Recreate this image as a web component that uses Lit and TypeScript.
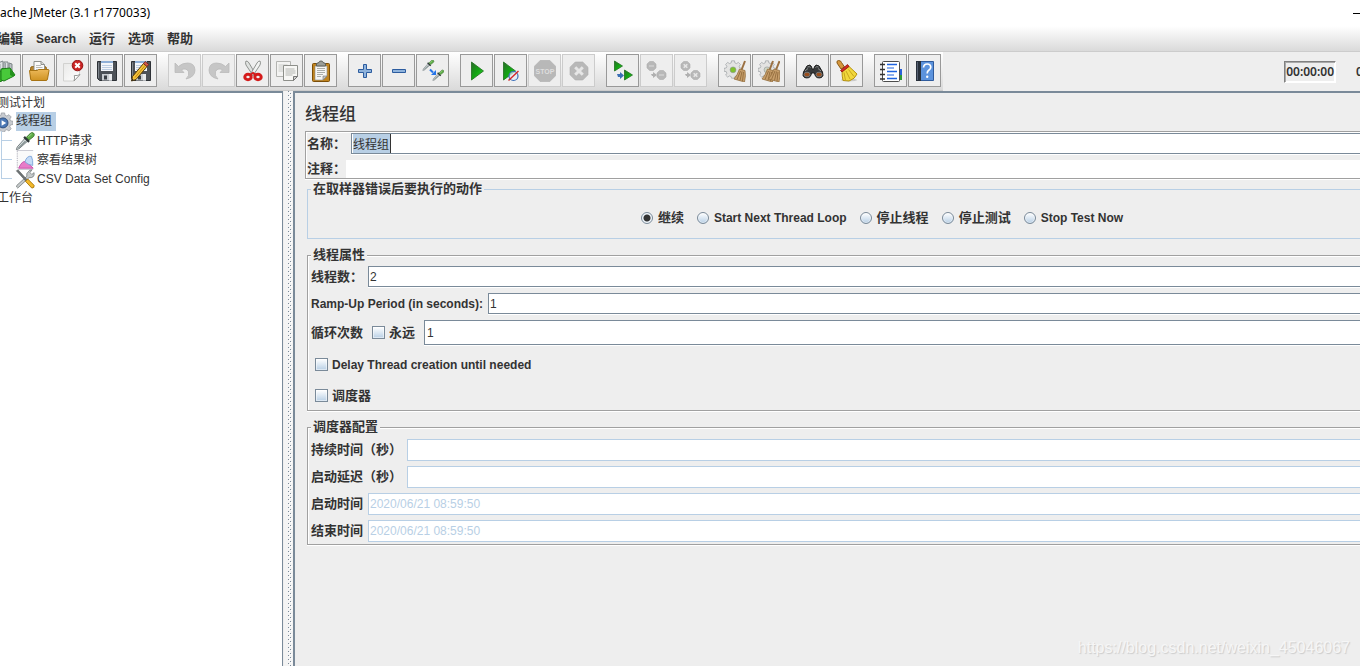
import { LitElement, html, svg, css, nothing } from "lit";
import { customElement, property } from "lit/decorators.js";

const sheet = (x: number, y: number, w: number, h: number) => svg`
  <path d="M${x} ${y}h${w}v${h - 4}l-4 4h-${w - 4}z" fill="#f7f7f5" stroke="#8d8f8a"/>
  <path d="M${x + w} ${y + h - 4}h-4v4z" fill="#cfd0cd" stroke="#777"/>
  <path d="M${x + 2} ${y + 3.5}h${w - 5}M${x + 2} ${y + 5.5}h${w - 4}M${x + 2} ${y + 7.5}h${w - 4}M${x + 2} ${y + 9.5}h${w - 7}" stroke="#b4b6b2"/>`;

const floppy = svg`
  <path d="M1.500 1.500h19v19h-17l-2-2z" fill="#4c5157" stroke="#2d3136"/>
  <path d="M2.500 2.500v15.500" stroke="#7e858c"/>
  <path d="M5 1h12v10h-12z" fill="#f3f6fa"/>
  <path d="M5 1h12v2h-12z" fill="#8fb0d8"/>
  <path d="M6 5.500h10M6 7.500h10M6 9.500h10" stroke="#bccde2"/>
  <path d="M6 14h10v6.500h-10z" fill="#c9cdd1"/>
  <path d="M8 15.500h3v4h-3z" fill="#3a3f45"/>
  <path d="M13 14h3v6.500h-3z" fill="#e8eaec"/>`;

const pipette = svg`
  <path d="M1.500 20.500l1-3L11 8l3 3-9.500 8.500z" fill="#dfe5e6" stroke="#6a7476"/>
  <path d="M3 18.500l8-8 1.500 1.500-8 7z" fill="#8b9798"/>
  <path d="M10 6.500l5.500 5.500" stroke="#30383a" stroke-width="2.500"/>
  <path d="M12.500 7L17 2.500q2-1.500 3.500 0t0 3.500L15.500 10z" fill="#5fae49" stroke="#37722a"/>
  <path d="M14.500 6.500l4-3.500" stroke="#a6dc93"/>`;

const gear = (fill: string, hub: string, r: number) => svg`
  <g stroke="#8b9096" stroke-width=".7" fill="${fill}">
    <path d="M9.200 1h3.600l.5 2.600 2 .8 2.200-1.500 2.500 2.500L18.500 7.700l.8 2L22 10.200v3.500l-2.700.5-.8 2 1.500 2.200-2.500 2.500-2.200-1.500-2 .8-.5 2h-3.600l-.5-2-2-.8-2.200 1.500L2 18.400l1.500-2.200-.8-2L0 13.700v-3.500l2.700-.5.8-2L2 5.400l2.500-2.500 2.200 1.500 2-.8z"/>
    <circle cx="11" cy="12" r="${r}" fill="${hub}"/>
  </g>`;

const broom = (x: number) => svg`
  <g transform="translate(${x} 0)">
    <path d="M10 1l-3.500 9" stroke="#9b7143" stroke-width="2"/>
    <path d="M4.500 9l5.500 1.500q1 5-.5 11.500L-1 19q3.500-4 5.500-10z" fill="#c89f6b" stroke="#96703f" stroke-width=".8"/>
    <path d="M5.500 11L2 19.500M7 11.500L5 20.500M8.500 12l-1 9" stroke="#8a6436" stroke-width=".8"/>
  </g>`;

const tri = (x: number, y: number, w: number, h: number) => svg`
  <path d="M${x} ${y}l${w} ${h / 2}l-${w} ${h / 2}z" fill="url(#green)" stroke="#1d6f1c" stroke-width=".8"/>`;

const octagon = (cx: number, cy: number, r: number) => {
  const k = r * 0.42;
  return svg`<path d="M${cx - k} ${cy - r}H${cx + k}L${cx + r} ${cy - k}V${cy + k}L${cx + k} ${cy + r}H${cx - k}L${cx - r} ${cy + k}V${cy - k}z" fill="#b8b8b8" stroke="#adadad" stroke-width=".6"/>`;
};

const cross = (cx: number, cy: number, r: number, w: number) => svg`
  <path d="M${cx - r} ${cy - r}l${2 * r} ${2 * r}M${cx + r} ${cy - r}l-${2 * r} ${2 * r}" stroke="#e6e6e6" stroke-width="${w}"/>`;

const icons: Record<string, unknown> = {
  templates: svg`
    <path d="M4 3l5-2v12H4zM10 2h4v12h-4z" fill="#dfe3e5" stroke="#7d8587"/>
    <path d="M15 3l3 1v9h-3z" fill="#b9c0c3" stroke="#7d8587"/>
    <path d="M11.500 3v8M6 4v7" stroke="#9aa3a6"/>
    <path d="M1 11h6l2-3v12l-2 1.500H1z" fill="#35b52a" stroke="#1d7c18"/>
    <path d="M7 9l9-1 5 7-2 1.500-9 4.500-3-1z" fill="#48c93a" stroke="#1d7c18"/>
    <path d="M16 8l5 7-2 1.500-3-1.500z" fill="#24921d"/>`,
  open: svg`
    <path d="M2.500 8.500q0-2 2-2h12q2 0 2 2v9h-16z" fill="#b9852c" stroke="#8f6312"/>
    <path d="M6 1.500h7l3.500 3V11H6z" fill="#fafafa" stroke="#8f918c"/>
    <path d="M13 1.500v3h3.500" fill="#ddd" stroke="#8f918c"/>
    <path d="M8 5.500h5M8 7.500h6.500M8 9.500h6.500" stroke="#b8bab6"/>
    <path d="M1.500 10.500h8l1-1h9.500q1 0 1 1l-1.500 8.500q-.3 1.500-1.500 1.500h-14q-1.200 0-1.400-1.500z" fill="url(#amber)" stroke="#a87414"/>`,
  close: svg`
    <path d="M1.500 3.500h16v12l-5.500 5.500H1.500z" fill="url(#page)" stroke="#d2d2d0"/>
    <path d="M18 14.500l-6 6.500q1-3 .3-5.500 3 .5 5.700-1z" fill="#fff" stroke="#989a97"/>
    <circle cx="15.500" cy="5.500" r="5.300" fill="#c92323" stroke="#941111"/>
    <path d="M13.200 3.200l4.600 4.600m0-4.600l-4.600 4.600" stroke="#fff" stroke-width="2"/>`,
  save: floppy,
  saveAs: svg`${floppy}
    <path d="M2.500 16.500L13.500 3.500l3.500 3L6 19.500 1.500 21z" fill="#f5c33a" stroke="#5a3c06"/>
    <path d="M5 17.500L15.300 5.200" stroke="#c48a14"/>
    <path d="M13.500 3.500l1.700-2 3.500 3-1.700 2z" fill="#d55a4b" stroke="#6d2118" stroke-width=".8"/>
    <path d="M1.500 21l.6-2.500 1.800 1.700z" fill="#222"/>`,
  undo: svg`<path d="M1 3v9.500h9L7.300 9.700q5.500-2.200 7.200 2 1.300 3.800-2.500 7.300 9-2 9-9Q20.500 3 13.500 3 8 3 4.500 6.500z" fill="#c6c6c6" stroke="#bababa" stroke-width=".8"/>`,
  redo: svg`<path d="M21 3v9.500h-9l2.700-2.800q-5.500-2.200-7.200 2-1.300 3.800 2.500 7.300-9-2-9-9Q1.500 3 8.500 3q5.500 0 9 3.500z" fill="#c6c6c6" stroke="#bababa" stroke-width=".8"/>`,
  cut: svg`
    <path d="M4 1q2 0 3 2l6.500 11-2.500 1.500L4 5Q3 2.500 4 1z" fill="#dfe2e0" stroke="#858884" stroke-width=".9"/>
    <path d="M18 1q-2 0-3 2L8.500 14l2.500 1.500L18 5Q19 2.500 18 1z" fill="#f2f3f2" stroke="#858884" stroke-width=".9"/>
    <ellipse cx="6" cy="17" rx="3.200" ry="2.700" fill="#eee" stroke="#d41b1b" stroke-width="3"/>
    <ellipse cx="16" cy="17" rx="3.200" ry="2.700" fill="#eee" stroke="#d41b1b" stroke-width="3"/>
    <path d="M8 15l3-2 3 2" stroke="#d41b1b" stroke-width="2"/>`,
  copy: svg`<g opacity=".6">${sheet(0.5, 1.5, 14, 15)}</g>${sheet(7.5, 5.5, 14, 15)}`,
  paste: svg`
    <rect x="2.500" y="3.500" width="17" height="18" rx="1" fill="#c0841f" stroke="#7c4f09"/>
    <path d="M5 6h12v10l-4 4H5z" fill="#f6f6f5" stroke="#8c8d8a" stroke-width=".6"/>
    <path d="M17 16h-4v4z" fill="#c4c5c2" stroke="#777" stroke-width=".6"/>
    <path d="M7 8.500h8M7 10.500h8M7 12.500h8M7 14.500h6M7 16.500h4" stroke="#abada9"/>
    <path d="M6.500 6V3.500L9 2.500q0-1.500 2-1.500t2 1.500l2.500 1V6z" fill="#9a9d98" stroke="#5c5f5a"/>`,
  plus: svg`<path d="M9.500 4.500h3v5h5v3h-5v5h-3v-5h-5v-3h5z" fill="#8fb3dc" stroke="#2c5c9f"/>`,
  minus: svg`<path d="M4.500 9.500h13v3h-13z" fill="#8fb3dc" stroke="#2c5c9f"/>`,
  toggle: svg`
    <g transform="translate(0 -1) scale(.56)">${pipette}</g>
    <g transform="translate(10 9) scale(.56)">${pipette}</g>
    <path d="M8 9.500l3 3" stroke="#2474e8" stroke-width="2"/>
    <path d="M14 10v5H9z" fill="#2474e8"/>`,
  start: tri(5.5, 2, 12, 18),
  startNoTimers: svg`${tri(3.5, 2, 12, 18)}
    <circle cx="13.500" cy="16" r="4.500" fill="#e6edf6" fill-opacity=".7" stroke="#3a6eb8" stroke-width="1.200"/>
    <path d="M8.500 20.500L18.500 11" stroke="#d42a2a" stroke-width="1.400"/>`,
  stop: svg`${octagon(11, 11, 10.8)}
    <text x="11" y="14" text-anchor="middle" class="stop-word">STOP</text>`,
  shutdown: svg`${octagon(11, 11, 9)}${cross(11, 11, 3.8, 3)}`,
  remoteStart: svg`${tri(2.5, 1, 8, 10)}${tri(12.5, 10, 8, 10)}
    <path d="M5 14h3v-2l4 3.500-4 3.500v-2H6z" fill="#3b6fb5"/>`,
  remoteStop: svg`${octagon(5.5, 6, 4.5)}${octagon(15.5, 15, 4.5)}
    <path d="M3 6h5M13 15h5" stroke="#d0d0d0" stroke-width="1.600"/>
    <path d="M5 14h2v-2l4 3-4 3v-2H6z" fill="#b0b0b0"/>`,
  remoteShutdown: svg`${octagon(5.5, 6, 4.5)}${octagon(15.5, 15, 4.5)}${cross(5.5, 6, 1.8, 1.6)}${cross(15.5, 15, 1.8, 1.6)}
    <path d="M5 14h2v-2l4 3-4 3v-2H6z" fill="#b0b0b0"/>`,
  clear: svg`<g transform="scale(.82)">${gear("#e3e3e2", "#7fc22e", 3.6)}</g>${broom(11)}`,
  clearAll: svg`<g transform="scale(.82)">${gear("#e3e3e2", "#cfd6c4", 3.6)}</g>${broom(5)}${broom(11.5)}`,
  search: svg`
    <path d="M5 6q3-2 4.500.5L10 9h2l.5-2.500Q14 4 17 6l3.500 6q1.500 4-1 5.500-5 1.500-6.500-2.500l-.5-2h-3l-.5 2Q7.500 19 2.500 17.500 0 16 1.500 12z" fill="#37393a" stroke="#1c1d1d"/>
    <path d="M5.500 7q2-1 3 .5M13.500 7.500q1-1.500 3-.5M3 11l3-2.500M19 11l-3-2.500" stroke="#8d9090" fill="none"/>
    <ellipse cx="5" cy="14.500" rx="3" ry="2.300" fill="#9a4f1e" stroke="#777"/>
    <ellipse cx="17" cy="14.500" rx="3" ry="2.300" fill="#9a4f1e" stroke="#777"/>`,
  searchReset: svg`
    <ellipse cx="13" cy="20" rx="8" ry="1.500" fill="#c9c9c9"/>
    <path d="M1 3q-.5-2.500 1.500-2.500Q5 .5 5.500 2.500L8.500 7l-3.500 2z" fill="#d5973c" stroke="#8b5a14"/>
    <path d="M6 11l6.500-5 8.500 8q-2 5-8 7l-6-.5q-1-4-1-9.500z" fill="#f2d83c" stroke="#b5910f"/>
    <path d="M8 12.500l1.500 8M10 11l4 8M12.500 9.500l5.500 7" stroke="#c7a51c"/>
    <path d="M4.500 10.500L11.500 4.500l1.500 2-7 5.500z" fill="#d22a22" stroke="#8e120c" stroke-width=".8"/>`,
  functions: svg`
    <path d="M19 9h3v6h-3z" fill="#2a62d8"/><path d="M19 15h3v5h-3z" fill="#2c9a35"/>
    <rect x="2.500" y="1.500" width="17" height="20" rx="1" fill="#fff" stroke="#4c4c4c"/>
    <path d="M0 4.500h5M0 9.500h5M0 14.500h5M0 19h5" stroke="#333" stroke-width="1.500"/>
    <path d="M7 4.500h10M7 11.500h10M7 18.500h10" stroke="#1f63e0" stroke-width="1.400"/>
    <path d="M7 8h7M7 15h7" stroke="#1f63e0" stroke-width="1.200"/>`,
  help: svg`
    <path d="M2.500 1.500h17v19h-17z" fill="#5c93dd" stroke="#2f5b9c"/>
    <path d="M2 1h5v20H2z" fill="#28303b"/>
    <path d="M3.500 2v18" stroke="#566071"/>
    <path d="M9.500 7.500q.3-3.500 3.700-3.500t3.600 3q0 2-2 3.300-1.600 1-1.600 3.200" stroke="#fff" stroke-width="1.700" fill="none"/>
    <circle cx="13.200" cy="16.800" r="1.200" fill="#fff"/>`,
  gear: svg`${gear("#c7cbd0", "#e9eef5", 5)}<circle cx="11" cy="12" r="5.500" fill="#4b78b5" stroke="#2c4c7c"/><path d="M9.500 9l5 3-5 3z" fill="#fff"/>`,
  pipette,
  chart: svg`
    <path d="M3 1v20h17V1z" fill="#fafafa"/>
    <path d="M2 .5h18M3 21.500h17" stroke="#c4c4ce"/>
    <path d="M2.500 1v20" stroke="#9a9aa8" stroke-dasharray="1 1"/>
    <path d="M4 20q4-9 8-7 3 2 8 7z" fill="#e77cc9" stroke="#c74ba6"/>
    <path d="M11 13q2-7 7-6 2 4 1.500 10-6-1-8.500-4z" fill="#c4daf6" stroke="#7da5da"/>`,
  tools: svg`
    <path d="M3 21q-2-1-1-3L13 8V5l3-3.500 2.500-.5-2 3 2 2L21 4q.5 3-1 4.500-2 1.500-4.500 1z" fill="#c6cacb" stroke="#6c7273" stroke-width=".8"/>
    <path d="M1.500 2l2-1 10 11-1.500 1.500z" fill="#6d7273" stroke="#44494a" stroke-width=".6"/>
    <path d="M11.500 13.500l2.500-2.500 7 7q.5 3-2.500 3z" fill="#f3b92b" stroke="#a87508"/>`,
};

interface Tool { icon: string; label: string; off?: boolean }
const t = (icon: string, label: string, off = false): Tool => ({ icon, label, off });

const toolGroups: Tool[][] = [
  [t("templates", "Templates"), t("open", "打开"), t("close", "关闭"), t("save", "保存"), t("saveAs", "保存为")],
  [t("undo", "撤销", true), t("redo", "重做", true), t("cut", "剪切"), t("copy", "复制"), t("paste", "粘贴")],
  [t("plus", "展开"), t("minus", "收起"), t("toggle", "切换")],
  [t("start", "启动"), t("startNoTimers", "不停顿启动"), t("stop", "停止", true), t("shutdown", "关闭线程", true)],
  [t("remoteStart", "远程启动"), t("remoteStop", "远程停止", true), t("remoteShutdown", "远程关闭", true)],
  [t("clear", "清除"), t("clearAll", "清除全部")],
  [t("search", "查找"), t("searchReset", "重置查找")],
  [t("functions", "函数助手"), t("help", "帮助")],
];

const onError = ["继续", "Start Next Thread Loop", "停止线程", "停止测试", "Stop Test Now"];

@customElement("jm-icon")
class JmIcon extends LitElement {
  @property() name = "";

  static styles = css`
    :host { display: block; width: 22px; height: 22px; }
    svg { display: block; width: 100%; height: 100%; }
    .stop-word { font: bold 7px "Liberation Sans", sans-serif; fill: #dedede; }
  `;

  render() {
    return html`<svg viewBox="0 0 22 22" fill="none" aria-hidden="true">
      <defs>
        <linearGradient id="green" x1="0" y1="0" x2="1" y2="1">
          <stop offset="0" stop-color="#2c6b2c"/><stop offset=".5" stop-color="#12a512"/><stop offset="1" stop-color="#35d135"/>
        </linearGradient>
        <linearGradient id="amber" x1="0" y1="0" x2="0" y2="1">
          <stop offset="0" stop-color="#edb95a"/><stop offset="1" stop-color="#cf9322"/>
        </linearGradient>
        <linearGradient id="page" x1="0" y1="0" x2="1" y2="1">
          <stop offset="0" stop-color="#e9e9e8"/><stop offset="1" stop-color="#fff"/>
        </linearGradient>
      </defs>
      ${icons[this.name] ?? nothing}
    </svg>`;
  }
}

@customElement("app-root")
class AppRoot extends LitElement {
  static styles = css`
    :host {
      --line: #7a8a99;
      --soft: #b8cfe5;
      --etch: #a0a0a0;
      --face: #eeeeee;
      display: flex;
      flex-direction: column;
      min-height: 100vh;
      position: relative;
      overflow: hidden;
      background: var(--face);
      color: #333;
      font: 12px/16px "Liberation Sans", "Noto Sans CJK SC", sans-serif;
    }
    * { box-sizing: border-box; }
    button, input { font: inherit; color: inherit; margin: 0; }

    .title-bar {
      display: flex;
      justify-content: space-between;
      align-items: center;
      height: 26px;
      background: #fff;
      color: #000;
      font: 12px/16px "Noto Sans", sans-serif;
    }
    .minimize { width: 7px; height: 20px; padding: 0; border: 0; background: none; display: flex; align-items: center; }
    .minimize::before { content: ""; width: 100%; height: 1px; background: #000; }

    .menu {
      display: flex;
      gap: 13px;
      height: 26px;
      align-items: center;
      margin-left: -3px;
      background: linear-gradient(#fff, #dadada);
      border-bottom: 1px solid #ccc;
    }
    .menu button { border: 0; padding: 0; background: none; font-weight: bold; }
    .cjk { font-size: 13px; }

    .tools {
      display: flex;
      align-items: center;
      justify-content: space-between;
      height: 39px;
      margin-left: -12px;
    }
    .groups {
      display: flex;
      gap: 11px;
      align-items: center;
      align-self: stretch;
      padding: 0 2px 1px 0;
      border-bottom: 1px solid #ccc;
      background: linear-gradient(#fff, #dadada);
    }
    .group { display: flex; gap: 1px; }
    .tool {
      display: grid;
      place-items: center;
      width: 33px;
      height: 33px;
      padding: 0;
      border: 1px solid #999;
      background: var(--face);
    }
    .tool:disabled { border-color: #ccc; }
    .status { display: flex; align-items: center; gap: 20px; }
    .clock { height: 22px; padding: 1px; border: 1px solid; border-color: #808080 #fff #fff #808080; box-shadow: inset 1px 1px 0 #aaa, inset -1px -1px 0 #fff; }
    .clock, .count { font: 600 12px/18px "Noto Sans", sans-serif; }
    .count { width: 4px; white-space: nowrap; }

    .main { flex: 1; display: grid; grid-template-columns: 284px 9px minmax(0, 1fr); }
    .tree-pane { background: #fff; border-top: 2px solid var(--line); border-right: 1px solid var(--line); margin-right: 1px; }
    .divider { background: #f4f4f4; }
    .divider svg { display: block; width: 9px; height: 100%; }

    ul { list-style: none; margin: 0; padding: 0; }
    .node { display: flex; align-items: center; height: 19px; gap: 2px; }
    .root-node { margin-left: -3px; }
    .group-node { margin-left: -7px; gap: 3px; }
    .node jm-icon { width: 20px; height: 20px; }
    .picked { background: var(--soft); height: 19px; line-height: 19px; padding-right: 4px; }
    .children { margin-left: 1px; }
    .children li { display: flex; gap: 3px; position: relative; }
    .children li::before { content: ""; width: 10px; height: 9px; border-left: 1px solid var(--soft); border-bottom: 1px solid var(--soft); }
    .children li:not(:last-child)::after { content: ""; position: absolute; left: 0; top: 0; height: 100%; border-left: 1px solid var(--soft); }

    .pane { border-top: 2px solid var(--line); border-left: 2px solid var(--line); padding: 10px 0 0 10px; }
    h1 { margin: 0; font-size: 17px; line-height: 24px; font-weight: 500; }
    .identity { margin-top: 4px; border: 1px solid var(--etch); border-right: 0; box-shadow: inset 1px 1px 0 #fff, 0 1px 0 #fff; padding: 1px 0 0 1px; }
    .row { display: flex; align-items: center; gap: 5px; }
    .row label, legend, .check { font-weight: bold; white-space: nowrap; }
    .row + .row { margin-top: 6px; }
    .row.flush { gap: 0; }
    .field {
      flex: 1;
      min-width: 0;
      height: 21px;
      padding: 0 1px;
      border: 1px solid var(--line);
      border-right: 0;
      border-radius: 0;
      background: #fff;
      box-shadow: 0 1px 0 #fff;
      outline: 0;
    }
    .bare { height: 18px; border: 0; box-shadow: none; }
    .tall { height: 25px; padding-left: 2px; }
    .marked {
      background: linear-gradient(var(--soft), var(--soft)) 1px 0 / 37px 100% no-repeat,
        linear-gradient(#333, #333) 38px 0 / 1px 100% no-repeat, #fff;
    }
    .field:disabled { height: 22px; border-color: var(--soft); color: var(--soft); box-shadow: none; }

    fieldset { margin: 0 0 8px 2px; padding: 3px 0 2px 3px; border: 1px solid var(--etch); border-right: 0; box-shadow: inset 1px 1px 0 #fff, 0 1px 0 #fff; min-width: 0; }
    legend { padding: 0 2px; background: var(--face); font-size: 13px; margin: 0; }
    .choices { margin-top: 2px; border-color: var(--soft); box-shadow: none; padding: 11px 0 11px 96px; }
    .choices legend { margin-left: -93px; }
    .schedule { padding-top: 4px; }
    .schedule .row + .row { margin-top: 5px; }
    .radios { display: flex; justify-content: center; gap: 13px; }
    .check { display: flex; align-items: center; gap: 4px; height: 19px; }
    .radios .check { gap: 5px; }
    .gap { margin-left: 4px; }
    .lone { margin: 10px 0 0 4px; }
    .lone + .lone { margin-top: 12px; }
    .last { margin-bottom: 3px; }
    input[type="radio"], input[type="checkbox"] {
      appearance: none;
      flex: none;
      width: 13px;
      height: 13px;
      border: 1px solid var(--line);
      background: linear-gradient(#fff, #dce8f3 50%, var(--soft));
      box-shadow: inset 0 0 0 1px #ffffff80;
    }
    input[type="radio"] { width: 12px; height: 12px; border-radius: 50%; }
    input[type="radio"]:checked { background: radial-gradient(circle, #333 3px, #e8f0f7 4px); }

    .watermark {
      position: absolute;
      right: 10px;
      bottom: 8px;
      color: #f6f6f6;
      font-size: 16px;
      line-height: 20px;
      text-shadow: 1px 1px 1px #ccc;
    }
  `;

  private label(text: string, id: string) {
    return html`<label class=${/^[\x00-\x7f]+$/.test(text) ? "" : "cjk"} for=${id}>${text}</label>`;
  }

  private row(text: string, id: string, value: string, disabled = false) {
    return html`<div class="row">
      ${this.label(text, id)}
      <input class="field" id=${id} type="text" .value=${value} ?disabled=${disabled}>
    </div>`;
  }

  render() {
    return html`
      <header class="title-bar">
        <span>ache JMeter (3.1 r1770033)</span>
        <button class="minimize" aria-label="最小化"></button>
      </header>
      <nav class="menu">
        <button class="cjk">编辑</button>
        <button>Search</button>
        <button class="cjk">运行</button>
        <button class="cjk">选项</button>
        <button class="cjk">帮助</button>
      </nav>
      <div class="tools">
        <div class="groups">
          ${toolGroups.map((group) => html`<div class="group">
            ${group.map((tool) => html`<button class="tool" aria-label=${tool.label} ?disabled=${tool.off}>
              <jm-icon name=${tool.icon}></jm-icon>
            </button>`)}
          </div>`)}
        </div>
        <div class="status"><span class="clock">00:00:00</span><span class="count">0</span></div>
      </div>
      <main class="main">
        <nav class="tree-pane">
          <ul>
            <li><div class="node root-node">测试计划</div></li>
            <li>
              <div class="node group-node"><jm-icon name="gear"></jm-icon><span class="picked">线程组</span></div>
              <ul class="children">
                <li><div class="node"><jm-icon name="pipette"></jm-icon><span>HTTP请求</span></div></li>
                <li><div class="node"><jm-icon name="chart"></jm-icon><span>察看结果树</span></div></li>
                <li><div class="node"><jm-icon name="tools"></jm-icon><span>CSV Data Set Config</span></div></li>
              </ul>
            </li>
            <li><div class="node root-node">工作台</div></li>
          </ul>
        </nav>
        <div class="divider">
          <svg aria-hidden="true">
            <pattern id="dots" width="9" height="4" patternUnits="userSpaceOnUse">
              <path d="M4 0h1v1h-1zM6 2h1v1h-1z" fill="#7a8a99"/>
              <path d="M5 1h1v1h-1zM7 3h1v1h-1z" fill="#fff"/>
            </pattern>
            <rect width="9" height="100%" fill="url(#dots)"/>
          </svg>
        </div>
        <section class="pane">
          <h1>线程组</h1>
          <div class="identity">
            <div class="row">
              ${this.label("名称：", "name")}
              <input class="field marked" id="name" type="text" .value=${"线程组"}>
            </div>
            <div class="row flush">
              ${this.label("注释：", "comment")}
              <input class="field bare" id="comment" type="text">
            </div>
          </div>
          <fieldset class="choices">
            <legend>在取样器错误后要执行的动作</legend>
            <div class="radios">
              ${onError.map((text, i) => html`<div class="check">
                <input type="radio" name="on-error" id="action-${i}" ?checked=${i === 0}>
                ${this.label(text, `action-${i}`)}
              </div>`)}
            </div>
          </fieldset>
          <fieldset>
            <legend>线程属性</legend>
            ${this.row("线程数：", "threads", "2")}
            ${this.row("Ramp-Up Period (in seconds):", "ramp-up", "1")}
            <div class="row">
              ${this.label("循环次数", "loops")}
              <div class="check gap"><input type="checkbox" id="forever">${this.label("永远", "forever")}</div>
              <input class="field tall gap" id="loops" type="text" .value=${"1"}>
            </div>
            <div class="check lone"><input type="checkbox" id="delay">${this.label("Delay Thread creation until needed", "delay")}</div>
            <div class="check lone last"><input type="checkbox" id="scheduler">${this.label("调度器", "scheduler")}</div>
          </fieldset>
          <fieldset class="schedule">
            <legend>调度器配置</legend>
            ${this.row("持续时间（秒）", "duration", "", true)}
            ${this.row("启动延迟（秒）", "startup-delay", "", true)}
            ${this.row("启动时间", "start-time", "2020/06/21 08:59:50", true)}
            ${this.row("结束时间", "end-time", "2020/06/21 08:59:50", true)}
          </fieldset>
        </section>
      </main>
      <div class="watermark">https://blog.csdn.net/weixin_45046067</div>
    `;
  }
}
